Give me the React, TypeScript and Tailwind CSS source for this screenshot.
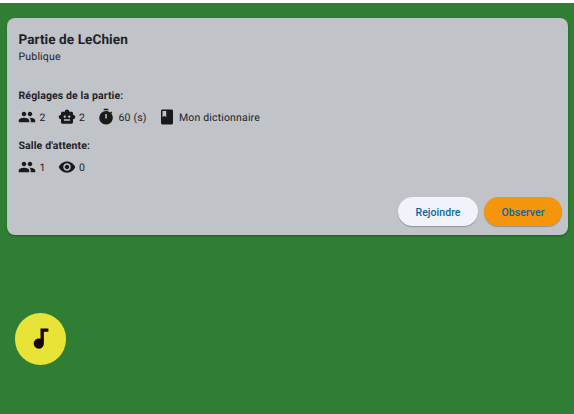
import type { ReactNode } from "react";
import { MdAudiotrack, MdClass, MdPeople, MdSmartToy, MdTimer, MdVisibility } from "react-icons/md";

function Stat({ icon, children }: { icon: ReactNode; children: ReactNode }) {
  return (
    <span className="flex items-center gap-[3.5px]">
      <span className="text-[18px] text-[#1a1a1b]">{icon}</span>
      <span className="pt-[2px]">{children}</span>
    </span>
  );
}

export default function App() {
  return (
    <div className="h-[414px] w-[574px] overflow-hidden bg-white pt-[3px] font-[Roboto,sans-serif] text-[#1f2226] [text-rendering:geometricPrecision]">
      <main className="h-full bg-[#2f7e33] pt-[15px] pr-[6px] pl-[7px]">
        <section className="flex h-[217px] flex-col rounded-[8px] bg-[#c0c3c8] pt-[14px] pl-[11.5px] shadow-[0_1px_2px_rgba(0,0,0,0.3)]">
          <h1 className="text-[13.6px] leading-[17px] font-bold tracking-[0.06px]">Partie de LeChien</h1>
          <p className="text-[10.5px] leading-[16px] tracking-[0.19px]">Publique</p>
          <h2 className="mt-[24px] text-[10.5px] leading-[14px] font-bold tracking-[0.12px]">Réglages de la partie:</h2>
          <div className="mt-[5px] -ml-[0.5px] flex h-[18px] items-center text-[10.5px] tracking-[0.16px]">
            <div className="w-[39.5px]"><Stat icon={<MdPeople />}>2</Stat></div>
            <div className="w-[39.5px]"><Stat icon={<MdSmartToy />}>2</Stat></div>
            <div className="w-[60.5px]"><Stat icon={<MdTimer />}>60 (s)</Stat></div>
            <Stat icon={<MdClass />}>Mon dictionnaire</Stat>
          </div>
          <h2 className="mt-[13px] text-[10.5px] leading-[14px] font-bold tracking-[0.12px]">Salle d'attente:</h2>
          <div className="mt-[5px] -ml-[0.5px] flex h-[18px] items-center text-[10.5px] tracking-[0.16px]">
            <div className="w-[39.5px]"><Stat icon={<MdPeople />}>1</Stat></div>
            <Stat icon={<MdVisibility />}>0</Stat>
          </div>
          <div className="mt-[21px] flex justify-end gap-[6px] pr-[6px] text-[10.5px] font-medium tracking-[0.06px] text-[#0b66a5]">
            <button className="h-[29px] w-[80px] rounded-full bg-[#f0f3fa] pt-[2px] shadow-[0_1px_1px_rgba(0,0,0,0.25)]">Rejoindre</button>
            <button className="h-[29px] w-[78px] rounded-full bg-[#f5950b] pt-[2px] shadow-[0_1px_1px_rgba(0,0,0,0.25)]">Observer</button>
          </div>
        </section>
        <button className="mt-[78px] ml-[7.5px] flex size-[51.5px] items-center justify-center rounded-full bg-[#e8e337] text-[27px] text-[#170303]">
          <MdAudiotrack />
        </button>
      </main>
    </div>
  );
}
